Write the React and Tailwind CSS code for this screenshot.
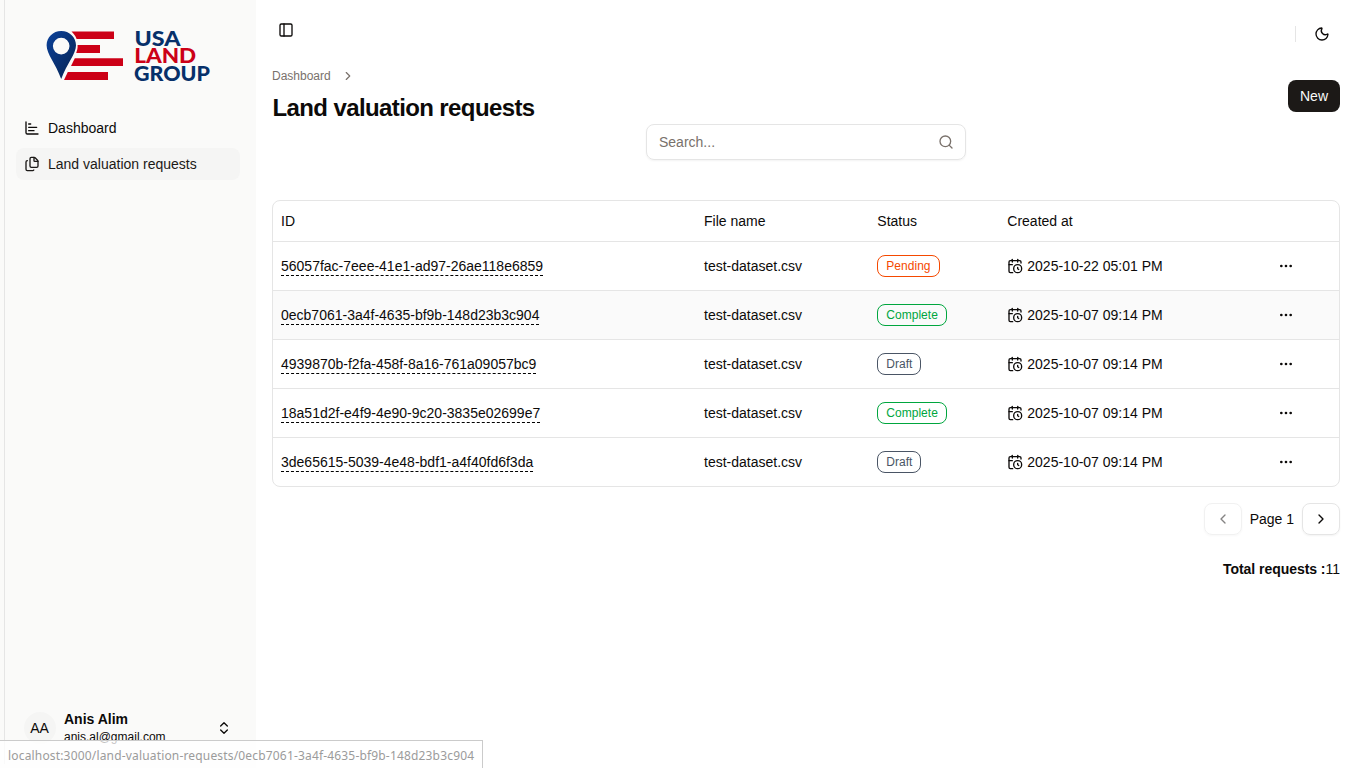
import React from "react";
import {
  CalendarClock,
  ChartBar,
  ChevronLeft,
  ChevronRight,
  ChevronsUpDown,
  Ellipsis,
  Files,
  Moon,
  PanelLeft,
  Search,
} from "lucide-react";

const rows = [
  { id: "56057fac-7eee-41e1-ad97-26ae118e6859", status: "Pending", date: "2025-10-22 05:01 PM" },
  { id: "0ecb7061-3a4f-4635-bf9b-148d23b3c904", status: "Complete", date: "2025-10-07 09:14 PM", hover: true },
  { id: "4939870b-f2fa-458f-8a16-761a09057bc9", status: "Draft", date: "2025-10-07 09:14 PM" },
  { id: "18a51d2f-e4f9-4e90-9c20-3835e02699e7", status: "Complete", date: "2025-10-07 09:14 PM" },
  { id: "3de65615-5039-4e48-bdf1-a4f40fd6f3da", status: "Draft", date: "2025-10-07 09:14 PM" },
];

const statusStyles = {
  Pending: "border-[#f54900] text-[#f54900]",
  Complete: "border-[#00a63e] text-[#00a63e]",
  Draft: "border-[#4a5565] text-[#4a5565]",
};

const columns = "grid grid-cols-[423px_173.3px_130px_264.7px_75px] items-center";

function Logo() {
  return (
    <svg width="170" height="72" viewBox="46 20 170 72" role="img" aria-label="USA Land Group">
      <defs>
        <linearGradient id="pin" x1="0" y1="0" x2="1" y2="1">
          <stop offset="0" stopColor="#0b419b" />
          <stop offset="1" stopColor="#062350" />
        </linearGradient>
      </defs>
      <g fill="#cc0017">
        <path d="M71.5 31.6H114V39H76.6C75.5 36.2 73.8 33.8 71.5 31.6Z" />
        <path d="M77.6 45H100V53H76.2C77.1 50.5 77.8 48 77.6 45Z" />
        <path d="M74.8 58.2H123V66H71Z" />
        <path d="M67.8 72H108V80H64Z" />
      </g>
      <path
        fill="url(#pin)"
        fillRule="evenodd"
        d="M61.2 31C53 31 46.6 37.4 46.6 45.3C46.6 54 55.5 63.5 61.2 79C67 63.5 76 54 76 45.3C76 37.4 69.5 31 61.2 31ZM61.2 37.8A8.3 8.3 0 1 1 61.2 54.4A8.3 8.3 0 1 1 61.2 37.8Z"
      />
      <g fontFamily="Lato, sans-serif" fontWeight="900" fontSize="20.5">
        <text x="134.5" y="45.8" fill="#07306a" textLength="46" lengthAdjust="spacingAndGlyphs">USA</text>
        <text x="134.2" y="63.2" fill="#cc0017" textLength="62" lengthAdjust="spacingAndGlyphs">LAND</text>
        <text x="134" y="80.8" fill="#07306a" textLength="76" lengthAdjust="spacingAndGlyphs">GROUP</text>
      </g>
    </svg>
  );
}

function Sidebar() {
  return (
    <aside className="flex h-full w-64 shrink-0 flex-col bg-[#fafaf9]">
      <div className="flex h-28 pt-5 pl-[46px]">
        <Logo />
      </div>
      <nav className="flex flex-col gap-1 px-4">
        <a className="flex h-8 items-center gap-2 rounded-lg px-2">
          <ChartBar size={16} />
          Dashboard
        </a>
        <a className="flex h-8 items-center gap-2 rounded-lg bg-[#f5f5f4] px-2 text-[#1c1917]">
          <Files size={16} />
          Land valuation requests
        </a>
      </nav>
      <div className="mt-auto mb-4 flex h-12 items-center gap-2 px-6">
        <div className="flex size-8 items-center justify-center rounded-full bg-[#f5f5f4] pr-px">AA</div>
        <div className="flex flex-1 flex-col">
          <span className="h-[18px] font-bold leading-4">Anis Alim</span>
          <span className="text-xs">anis.al@gmail.com</span>
        </div>
        <ChevronsUpDown size={16} />
      </div>
    </aside>
  );
}

function RequestsTable() {
  return (
    <div className="mt-10 overflow-hidden rounded-lg border border-[#e5e5e5]">
      <div className={columns + " h-10"}>
        <span className="pl-2">ID</span>
        <span className="pl-2">File name</span>
        <span className="pl-2">Status</span>
        <span className="pl-2">Created at</span>
      </div>
      {rows.map((row) => (
        <div
          key={row.id}
          className={columns + " h-[49px] border-t border-[#e5e5e5]" + (row.hover ? " bg-[#fafafa]" : "")}
        >
          <div className="flex pl-2">
            <a className="border-b border-dashed border-black pt-[2px] leading-[17px]">{row.id}</a>
          </div>
          <span className="pl-2">test-dataset.csv</span>
          <div className="flex pl-2">
            <span className={"rounded-lg border px-2 py-0.5 text-xs tracking-[0.03px] " + statusStyles[row.status]}>
              {row.status}
            </span>
          </div>
          <div className="flex items-center gap-1 pl-2">
            <CalendarClock size={16} />
            {row.date}
          </div>
          <div className="flex pl-[14px]">
            <Ellipsis size={16} />
          </div>
        </div>
      ))}
    </div>
  );
}

export default function App() {
  return (
    <div className="relative flex h-screen w-full overflow-hidden bg-white font-['Liberation_Sans',Arial,sans-serif] text-sm text-[#0c0a09]">
      <Sidebar />
      <main className="flex min-w-0 flex-1 flex-col pr-[26px] pl-4">
        <header className="flex h-[68px] items-start justify-between">
          <div className="flex pt-[22px] pl-1.5">
            <PanelLeft size={16} />
          </div>
          <div className="flex items-center gap-[18px] pt-[26px] pr-2.5">
            <span className="h-4 w-px bg-[#e5e5e5]" />
            <Moon size={16} />
          </div>
        </header>
        <div className="flex items-start justify-between">
          <div>
            <div className="flex h-4 items-center gap-2.5 text-xs text-[#79716b]">
              Dashboard
              <ChevronRight size={14} />
            </div>
            <h1 className="mt-2 pl-[0.5px] text-2xl font-bold tracking-[-0.61px]">Land valuation requests</h1>
          </div>
          <button className="mt-3 h-8 rounded-lg bg-[#1c1917] px-3 text-[#fafaf9]">New</button>
        </div>
        <div className="flex h-9 w-80 items-center justify-between self-center rounded-lg border border-[#e5e5e5] pr-[11px] pl-3 text-[#79716b] shadow-xs">
          Search...
          <Search size={16} />
        </div>
        <RequestsTable />
        <div className="mt-4 flex items-center justify-end gap-2">
          <button className="flex h-8 w-[38px] items-center justify-center rounded-lg border border-[#e5e5e5] opacity-50 shadow-xs">
            <ChevronLeft size={16} />
          </button>
          Page 1
          <button className="flex h-8 w-[38px] items-center justify-center rounded-lg border border-[#e5e5e5] shadow-xs">
            <ChevronRight size={16} />
          </button>
        </div>
        <p className="mt-6 text-right">
          <b className="tracking-[-0.05px]">Total requests :</b>11
        </p>
      </main>
      <div className="absolute top-0 left-0 h-[764px] w-[5px] border-r border-[#e5e5e5] bg-[#fafaf9]" />
      <div className="absolute bottom-0 left-0 flex h-7 w-[483px] items-center border-t border-r border-[#cbcbcb] bg-white/75 pt-[2px] pl-2 font-['Noto_Sans',sans-serif] text-xs tracking-[0.17px] whitespace-nowrap text-[#9b9b9b]">
        localhost:3000/land-valuation-requests/0ecb7061-3a4f-4635-bf9b-148d23b3c904
      </div>
    </div>
  );
}
